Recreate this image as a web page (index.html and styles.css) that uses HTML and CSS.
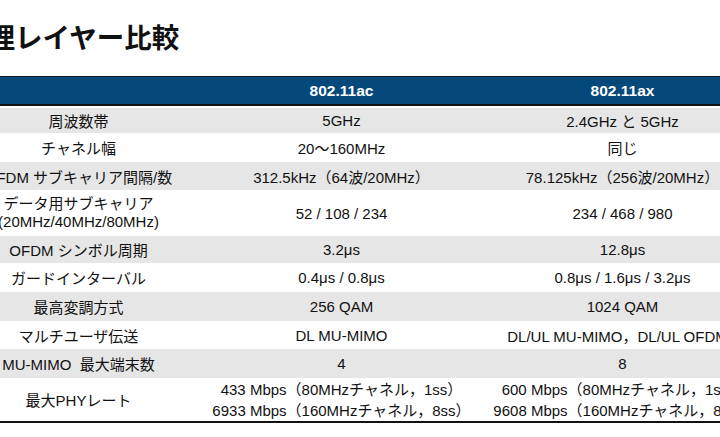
FILE: index.html
```html
<!DOCTYPE html>
<html lang="ja">
<head>
<meta charset="utf-8">
<title>物理レイヤー比較</title>
<link rel="stylesheet" href="styles.css">
</head>
<body>
<div class="page">
  <h1 class="title">物理レイヤー比較</h1>
  <div class="table">
    <div class="row head">
      <div class="cell"></div>
      <div class="cell">802.11ac</div>
      <div class="cell">802.11ax</div>
    </div>
    <div class="row gray h25">
      <div class="cell">周波数帯</div>
      <div class="cell">5GHz</div>
      <div class="cell">2.4GHz と 5GHz</div>
    </div>
    <div class="row h29">
      <div class="cell">チャネル幅</div>
      <div class="cell">20～160MHz</div>
      <div class="cell">同じ</div>
    </div>
    <div class="row gray h28">
      <div class="cell">OFDM サブキャリア間隔/数</div>
      <div class="cell">312.5kHz（64波/20MHz）</div>
      <div class="cell">78.125kHz（256波/20MHz）</div>
    </div>
    <div class="row h46">
      <div class="cell two">データ用サブキャリア<br>(20MHz/40MHz/80MHz)</div>
      <div class="cell">52 / 108 / 234</div>
      <div class="cell">234 / 468 / 980</div>
    </div>
    <div class="row gray h27">
      <div class="cell">OFDM シンボル周期</div>
      <div class="cell">3.2μs</div>
      <div class="cell">12.8μs</div>
    </div>
    <div class="row h29">
      <div class="cell">ガードインターバル</div>
      <div class="cell">0.4μs / 0.8μs</div>
      <div class="cell">0.8μs / 1.6μs / 3.2μs</div>
    </div>
    <div class="row gray h29">
      <div class="cell">最高変調方式</div>
      <div class="cell">256 QAM</div>
      <div class="cell">1024 QAM</div>
    </div>
    <div class="row h28">
      <div class="cell">マルチユーザ伝送</div>
      <div class="cell">DL MU-MIMO</div>
      <div class="cell nowrap">DL/UL MU-MIMO，DL/UL OFDMA</div>
    </div>
    <div class="row gray h29">
      <div class="cell">MU-MIMO&nbsp; 最大端末数</div>
      <div class="cell">4</div>
      <div class="cell">8</div>
    </div>
    <div class="row last h43">
      <div class="cell">最大PHYレート</div>
      <div class="cell rate">433 Mbps（80MHzチャネル，1ss）<br>6933 Mbps（160MHzチャネル，8ss）</div>
      <div class="cell rate">600 Mbps（80MHzチャネル，1ss）<br>9608 Mbps（160MHzチャネル，8ss）</div>
    </div>
  </div>
</div>
</body>
</html>
```

FILE: styles.css
```css
html, body {
  margin: 0;
  padding: 0;
  background: #ffffff;
}
body {
  width: 720px;
  height: 437px;
  overflow: hidden;
  font-family: "Liberation Sans", "Noto Sans CJK JP", sans-serif;
  color: #111111;
}
.page {
  margin-left: -44px;
  width: 820px;
}
.title {
  margin: 0;
  padding: 21px 0 0 4px;
  height: 31px;
  line-height: 31px;
  font-family: "Noto Sans CJK JP", sans-serif;
  font-size: 27.5px;
  font-weight: 700;
  color: #111111;
}
.table {
  margin-top: 24px;
  border-top: 1px solid #1a1a1a;
  border-bottom: 2px solid #111111;
}
.row {
  display: grid;
  grid-template-columns: 245px 281px 281px;
  background: #ffffff;
}
.row.gray {
  background: #e6e6e6;
}
.cell {
  display: flex;
  align-items: center;
  justify-content: center;
  text-align: center;
  font-size: 15px;
  white-space: nowrap;
}
.head {
  height: 27px;
  background: #05497b;
  border-bottom: 2px solid #111111;
  margin-bottom: 2px;
}
.head .cell {
  color: #ffffff;
  font-weight: 700;
  font-size: 15.5px;
}
.h25 { height: 25px; }
.h27 { height: 27px; }
.h28 { height: 28px; }
.h29 { height: 29px; }
.h43 { height: 43px; }
.h46 { height: 46px; }
.two {
  line-height: 18px;
}
.rate {
  line-height: 21px;
}
```
